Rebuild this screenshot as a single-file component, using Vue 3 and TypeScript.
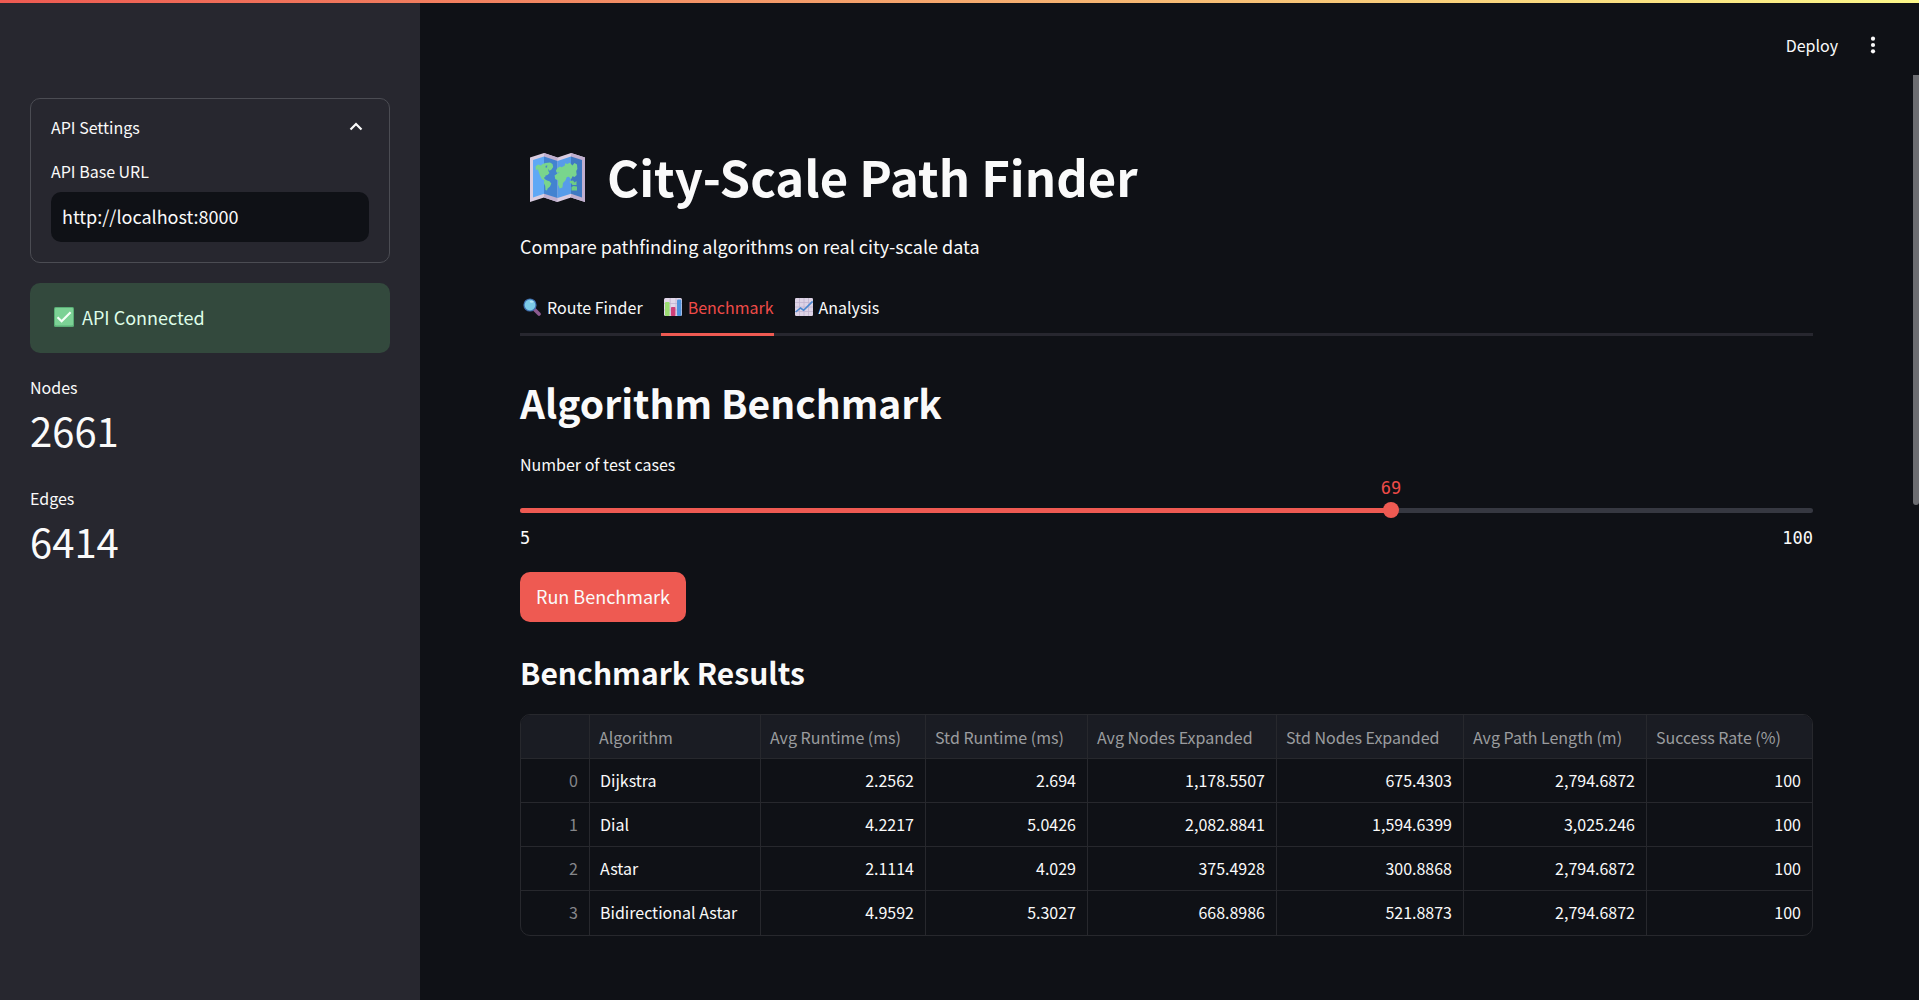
<script setup lang="ts">
import { computed, ref } from 'vue'

interface Metric {
  label: string
  value: string
}

interface Column {
  title: string
  weight: number
}

interface Row {
  algorithm: string
  values: string[]
}

const apiUrl = ref('http://localhost:8000')
const tabs = ['Route Finder', 'Benchmark', 'Analysis']
const activeTab = ref('Benchmark')

const metrics: Metric[] = [
  { label: 'Nodes', value: '2661' },
  { label: 'Edges', value: '6414' },
]

const minCases = 5
const maxCases = 100
const cases = ref(69)
const percent = computed(() => `${((cases.value - minCases) / (maxCases - minCases)) * 100}%`)

const columns: Column[] = [
  { title: '', weight: 69 },
  { title: 'Algorithm', weight: 171 },
  { title: 'Avg Runtime (ms)', weight: 165 },
  { title: 'Std Runtime (ms)', weight: 162 },
  { title: 'Avg Nodes Expanded', weight: 189 },
  { title: 'Std Nodes Expanded', weight: 187 },
  { title: 'Avg Path Length (m)', weight: 183 },
  { title: 'Success Rate (%)', weight: 165 },
]
const totalWeight = columns.reduce((sum, c) => sum + c.weight, 0)

const rows: Row[] = [
  { algorithm: 'Dijkstra', values: ['2.2562', '2.694', '1,178.5507', '675.4303', '2,794.6872', '100'] },
  { algorithm: 'Dial', values: ['4.2217', '5.0426', '2,082.8841', '1,594.6399', '3,025.246', '100'] },
  { algorithm: 'Astar', values: ['2.1114', '4.029', '375.4928', '300.8868', '2,794.6872', '100'] },
  { algorithm: 'Bidirectional Astar', values: ['4.9592', '5.3027', '668.8986', '521.8873', '2,794.6872', '100'] },
]
</script>

<template>
  <div class="app">
    <div class="decoration"></div>

    <aside class="sidebar">
      <details class="expander" open>
        <summary>
          <span>API Settings</span>
          <svg class="chevron" viewBox="0 0 14 10" aria-hidden="true">
            <path d="M1.5 7.5 L7 2 L12.5 7.5" fill="none" stroke="#fafafa" stroke-width="2.2" />
          </svg>
        </summary>
        <div class="expander-body">
          <label for="api-url">API Base URL</label>
          <input id="api-url" v-model="apiUrl" type="text" />
        </div>
      </details>

      <div class="alert" role="status">
        <svg viewBox="0 0 20 20" aria-hidden="true">
          <rect width="20" height="20" rx="1.5" fill="#5aae76" />
          <rect x="1" y="1" width="18" height="17.5" rx="1" fill="#7cd295" />
          <path d="M3.5 10.2 L7.6 14.2 L16.6 5.2" fill="none" stroke="#f4fff7" stroke-width="2.2" />
        </svg>
        <span>API Connected</span>
      </div>

      <dl class="metrics">
        <div v-for="m in metrics" :key="m.label">
          <dt>{{ m.label }}</dt>
          <dd>{{ m.value }}</dd>
        </div>
      </dl>
    </aside>

    <main class="main">
      <header class="toolbar">
        <button type="button">Deploy</button>
        <button type="button" aria-label="Menu">
          <svg viewBox="0 0 6 18" aria-hidden="true">
            <circle cx="3" cy="2.7" r="2.1" />
            <circle cx="3" cy="9" r="2.1" />
            <circle cx="3" cy="15.3" r="2.1" />
          </svg>
        </button>
      </header>

      <div class="content">
        <h1>
          <svg class="map" viewBox="0 0 55 49" aria-hidden="true">
            <path d="M0 4.5 L14 0 L27.5 4.5 L41 0 L55 4.5 V49 L41 44.5 L27.5 49 L14 44.5 L0 49 Z" fill="#d9cce0" />
            <path d="M14 0 L27.5 4.5 V49 L14 44.5 Z M41 0 L55 4.5 V49 L41 44.5 Z" fill="#c0afcf" />
            <path d="M3 7 L14 3.6 V40.8 L3 44.6 Z" fill="#5fa8f5" />
            <path d="M14 3.6 L27.5 8 V45 L14 40.8 Z" fill="#4383d0" />
            <path d="M27.5 8 L41 3.6 V40.8 L27.5 45 Z" fill="#579ce9" />
            <path d="M41 3.6 L52 7 V44.6 L41 40.8 Z" fill="#3f79c2" />
            <path
              d="M5.5 13.5 L8 11.5 L11 12.5 L12.5 11 L15.5 10 L20 9.6 L22.5 11 L23.2 14 L21.5 16.5 L19.6 17.8 L18 15.8 L18.6 18.4 L19.5 20 L17.5 22 L15.6 22.6 L15 24.4 L13.8 24 L14.6 26 L17 27.5 L19.5 28.2 L21.3 30.5 L20 33.5 L17.6 35.5 L17 37.4 L15.5 37 L15.2 33 L13.8 30 L14.2 27.6 L11.8 26 L9.8 22 L8.6 18.5 L7.8 16 L6 17.5 Z"
              fill="#79d58d"
            />
            <path d="M15.5 13 L17.3 12.2 L17 14.4 L15.7 14.8 Z" fill="#4383d0" />
            <path
              d="M26 17.5 L27.2 15.2 L30 13.6 L31.5 14.2 L34.6 12.8 L35.2 10.2 L37.2 11 L39.8 9.8 L42.4 12.5 L44.5 10 L47 11.5 L47.4 16 L46.2 18 L46.7 22 L44.6 24 L42.6 23.2 L41 26.2 L39 23.8 L36.8 24 L35.4 27.5 L33 30 L32.4 34.5 L29.6 35.6 L28 31.5 L28.2 27.6 L25.2 26 L24.6 22.6 L27.5 20.6 L29.8 19.6 L26.5 19.5 Z"
              fill="#79d58d"
            />
            <path d="M39.8 28 L43 27.5 L44.5 29.5 L46.5 28 V32 H42.5 L41 30 H39.8 Z M41.5 34 L43.5 33 L47 33.5 V37.5 H41.5 Z" fill="#6fcc84" />
          </svg>
          <span>City-Scale Path Finder</span>
        </h1>
        <p class="lead">Compare pathfinding algorithms on real city-scale data</p>

        <div class="tabs" role="tablist">
          <button
            v-for="tab in tabs"
            :key="tab"
            type="button"
            role="tab"
            :aria-selected="tab === activeTab"
            :class="{ active: tab === activeTab }"
            @click="activeTab = tab"
          >
            <svg v-if="tab === 'Route Finder'" viewBox="0 0 18 18" aria-hidden="true">
              <path d="M12 12 L16 16" stroke="#8c5a8f" stroke-width="3.6" stroke-linecap="round" />
              <circle cx="7" cy="7" r="6.6" fill="#3f6fae" />
              <circle cx="7" cy="7" r="5.4" fill="#7ccbe8" />
              <ellipse cx="8.6" cy="3.8" rx="2" ry="1" fill="#b5e6f7" />
            </svg>
            <svg v-else-if="tab === 'Benchmark'" viewBox="0 0 18 18" aria-hidden="true">
              <rect width="18" height="18" rx="1.5" fill="#e2d8ea" />
              <path d="M0 5.5 H18 M0 12 H18 M6.2 0 V18 M12 0 V18" stroke="#c3b4d0" stroke-width="0.8" />
              <rect x="1" y="4" width="4.6" height="14" rx="1" fill="#9bdc72" />
              <rect x="7" y="9" width="4.4" height="9" rx="0.8" fill="#cf3f78" />
              <rect x="13" y="1.6" width="4.4" height="16.4" rx="1" fill="#4f93dd" />
            </svg>
            <svg v-else viewBox="0 0 18 18" aria-hidden="true">
              <rect width="18" height="18" rx="1.2" fill="#ddd3e6" />
              <path d="M0 4.5 H18 M0 9 H18 M0 13.5 H18 M4.5 0 V18 M9 0 V18 M13.5 0 V18" stroke="#c2b4cf" stroke-width="0.8" />
              <path d="M0.6 14 L5.5 10 L8.6 12.2 L17.6 3.4" fill="none" stroke="#4a87cf" stroke-width="1.6" />
            </svg>
            <span>{{ tab }}</span>
          </button>
        </div>

        <h2>Algorithm Benchmark</h2>

        <div class="slider">
          <label for="cases">Number of test cases</label>
          <div class="value-row">
            <output for="cases" :style="{ left: percent }">{{ cases }}</output>
          </div>
          <div class="rail">
            <div class="track">
              <div class="fill" :style="{ width: percent }"></div>
            </div>
            <input id="cases" v-model.number="cases" type="range" :min="minCases" :max="maxCases" />
          </div>
          <div class="limits">
            <span>{{ minCases }}</span>
            <span>{{ maxCases }}</span>
          </div>
        </div>

        <button type="button" class="primary">Run Benchmark</button>

        <h3>Benchmark Results</h3>

        <div class="table-frame">
          <table>
            <colgroup>
              <col v-for="c in columns" :key="c.title" :style="{ width: `${(c.weight / totalWeight) * 100}%` }" />
            </colgroup>
            <thead>
              <tr>
                <th v-for="c in columns" :key="c.title" scope="col">{{ c.title }}</th>
              </tr>
            </thead>
            <tbody>
              <tr v-for="(row, i) in rows" :key="row.algorithm">
                <td class="index">{{ i }}</td>
                <td class="name">{{ row.algorithm }}</td>
                <td v-for="(v, j) in row.values" :key="j">{{ v }}</td>
              </tr>
            </tbody>
          </table>
        </div>
      </div>

      <div class="scroll-thumb"></div>
    </main>
  </div>
</template>

<style>
body {
  background: #0f1116;
}
</style>

<style scoped>
* {
  box-sizing: border-box;
}

.app {
  position: relative;
  display: flex;
  min-height: 100vh;
  background: #0f1116;
  color: #fafafa;
  font-family: 'Noto Sans CJK SC', 'Open Sans', sans-serif;
  font-size: 16px;
  line-height: 24px;
}

.decoration {
  position: absolute;
  inset: 0 0 auto;
  height: 3px;
  z-index: 2;
  background: linear-gradient(90deg, #ee5a52, #fcf88a);
}

button,
input {
  font: inherit;
  color: inherit;
}

button {
  border: 0;
  padding: 0;
  background: none;
  cursor: pointer;
}

svg {
  display: block;
  flex: none;
}

h1,
h2,
h3,
p,
dl,
dd {
  margin: 0;
}

/* Sidebar */
.sidebar {
  flex: none;
  width: 420px;
  padding: 98px 30px 30px;
  background: #27272f;
}

.expander {
  border: 1px solid #4b4c53;
  border-radius: 10px;
}

summary {
  display: flex;
  align-items: center;
  justify-content: space-between;
  padding: 16px 26px 12px 20px;
  list-style: none;
  cursor: pointer;
}

.chevron {
  width: 14px;
  height: 10px;
}

.expander-body {
  padding: 8px 20px 20px;
}

.expander-body label {
  display: block;
  margin-bottom: 9px;
}

.expander-body input {
  display: block;
  width: 100%;
  height: 50px;
  padding: 0 11px 2px;
  border: 0;
  border-radius: 10px;
  background: #0f1116;
  font-size: 18px;
}

.alert {
  display: flex;
  align-items: center;
  gap: 8px;
  margin-top: 20px;
  padding: 19px 24px 21px;
  border-radius: 10px;
  background: #33493d;
  color: #dffde9;
  font-size: 18px;
  line-height: 30px;
}

.alert svg {
  width: 20px;
  height: 20px;
}

.metrics {
  display: flex;
  flex-direction: column;
  gap: 25px;
  margin-top: 21px;
}

.metrics dt {
  line-height: 26px;
}

.metrics dd {
  font-size: 40px;
  line-height: 60px;
}

/* Main column */
.main {
  position: relative;
  flex: 1;
  min-width: 0;
}

.toolbar {
  display: flex;
  align-items: center;
  justify-content: flex-end;
  gap: 32px;
  height: 75px;
  padding: 14px 43px 0 0;
}

.toolbar svg {
  width: 6px;
  height: 18px;
  fill: #fafafa;
}

.scroll-thumb {
  position: absolute;
  top: 75px;
  right: 0;
  width: 6px;
  height: 43%;
  border-radius: 0 0 3px 3px;
  background: #6c6d71;
}

.content {
  padding: 67px 106px 60px 100px;
}

h1 {
  display: flex;
  align-items: center;
  font-size: 49px;
  font-weight: 700;
  line-height: 68px;
}

.map {
  width: 55px;
  height: 49px;
  margin: 2px 22px 0 10px;
}

.lead {
  margin-top: 20px;
  font-size: 18px;
  line-height: 32px;
}

.tabs {
  display: flex;
  gap: 18px;
  margin-top: 19px;
  box-shadow: inset 0 -3px #27272f;
}

.tabs button {
  display: flex;
  align-items: center;
  gap: 6px;
  height: 55px;
  padding-left: 3px;
  border-bottom: 3px solid transparent;
}

.tabs svg {
  width: 18px;
  height: 18px;
}

.tabs .active {
  border-color: #ee5a52;
  color: #ee4b48;
}

h2 {
  margin-top: 38px;
  font-size: 39px;
  font-weight: 600;
  line-height: 56px;
}

.slider {
  margin-top: 22px;
}

.slider label {
  display: block;
}

.value-row {
  position: relative;
  height: 26px;
}

.value-row output {
  position: absolute;
  top: 0;
  transform: translateX(-50%);
  color: #ee4b48;
}

.value-row,
.limits {
  font-family: 'DejaVu Sans Mono', monospace;
  font-size: 17px;
}

.rail {
  display: grid;
  align-items: center;
}

.rail > * {
  grid-area: 1 / 1;
}

.track {
  height: 5px;
  overflow: hidden;
  border-radius: 3px;
  background: #363841;
}

.fill {
  height: 100%;
  background: #ee5a52;
}

.rail input {
  appearance: none;
  width: calc(100% + 16px);
  height: 16px;
  margin: 0 -8px;
  background: none;
}

.rail input::-webkit-slider-thumb {
  appearance: none;
  width: 16px;
  height: 16px;
  border-radius: 50%;
  background: #ee5a52;
}

.limits {
  display: flex;
  justify-content: space-between;
  margin-top: 8px;
}

.primary {
  height: 50px;
  margin-top: 22px;
  padding: 0 16px 2px;
  border-radius: 10px;
  background: #ee5a52;
  font-size: 18px;
}

h3 {
  margin-top: 27px;
  font-size: 30px;
  font-weight: 600;
  line-height: 46px;
}

.table-frame {
  margin-top: 19px;
  overflow: hidden;
  border: 1px solid #27282d;
  border-radius: 10px;
}

table {
  width: 100%;
  table-layout: fixed;
  border-collapse: separate;
  border-spacing: 0;
}

th,
td {
  height: 44px;
  padding: 0 11px 2px 10px;
  border-right: 1px solid #27282d;
  border-bottom: 1px solid #27282d;
  text-align: right;
  white-space: nowrap;
}

th {
  padding: 0 9px;
  background: #1a1c23;
  color: #9b9c9f;
  font-weight: 400;
  text-align: left;
}

th:last-child,
td:last-child {
  border-right: 0;
}

tbody tr:last-child td {
  border-bottom: 0;
}

.index {
  color: #85868a;
}

.name {
  text-align: left;
}
</style>
